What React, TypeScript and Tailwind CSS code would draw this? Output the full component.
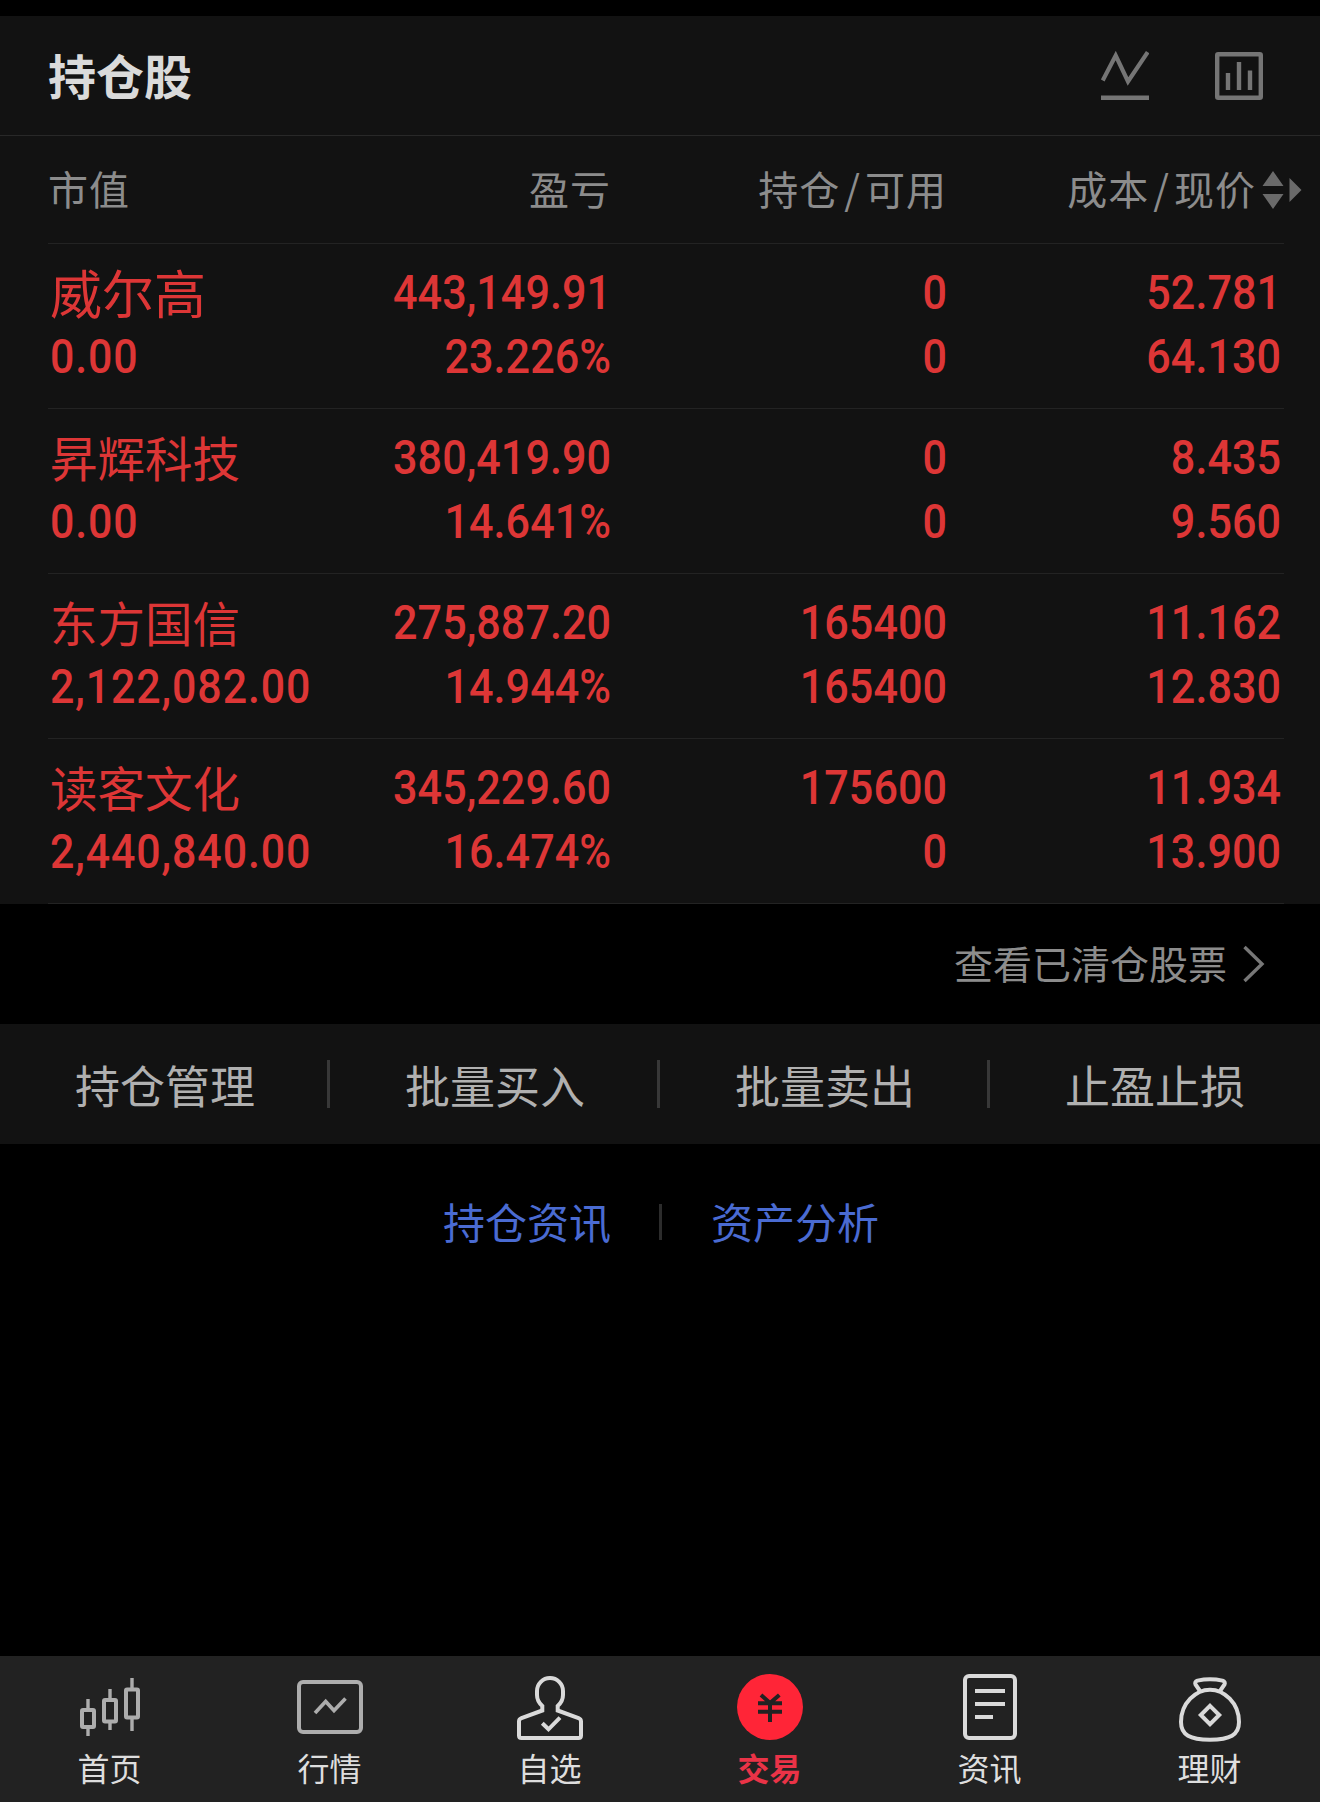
/**
 * Pantalla de posiciones: tabla de acciones, accesos rápidos y navegación inferior.
 */
import type { ReactNode } from 'react';

interface Holding {
  name: string;
  value: string;
  profit: string;
  rate: string;
  held: string;
  available: string;
  cost: string;
  price: string;
}

const holdings: Holding[] = [
  { name: '威尔高', value: '0.00', profit: '443,149.91', rate: '23.226%', held: '0', available: '0', cost: '52.781', price: '64.130' },
  { name: '昇辉科技', value: '0.00', profit: '380,419.90', rate: '14.641%', held: '0', available: '0', cost: '8.435', price: '9.560' },
  { name: '东方国信', value: '2,122,082.00', profit: '275,887.20', rate: '14.944%', held: '165400', available: '165400', cost: '11.162', price: '12.830' },
  { name: '读客文化', value: '2,440,840.00', profit: '345,229.60', rate: '16.474%', held: '175600', available: '0', cost: '11.934', price: '13.900' },
];

const actions = ['持仓管理', '批量买入', '批量卖出', '止盈止损'];

function NavIcon({ color, children }: { color: string; children: ReactNode }) {
  return (
    <svg className="w-[66px] h-[68px]" viewBox="0 0 66 68" fill="none" stroke={color} strokeWidth="4">
      {children}
    </svg>
  );
}

const tabs = [
  {
    label: '首页',
    icon: (
      <NavIcon color="#adadad">
        <rect x="5" y="36" width="12" height="17" rx="1" />
        <rect x="27" y="26" width="12" height="21.5" rx="1" />
        <rect x="49" y="15.5" width="12" height="28" rx="1" />
        <path d="M11 25v10M11 54v8M33 15v10M33 48v8M55 4v11M55 45v12" strokeWidth="3.4" />
      </NavIcon>
    ),
  },
  {
    label: '行情',
    icon: (
      <NavIcon color="#adadad">
        <rect x="2" y="8" width="62" height="50" rx="4" />
        <path d="M18 39L28.7 27.5L37 36.5L48.5 24.5" strokeWidth="3.6" />
      </NavIcon>
    ),
  },
  {
    label: '自选',
    icon: (
      <NavIcon color="#dadada">
        <path d="M25.3 36.5V32C22 29 20 25.5 20 21V17a13 13 0 0 1 26 0V21C46 25.5 44 29 40.7 32V36.5L61.5 44Q64 45 64 47.5V61.5Q64 64 61.5 64H4.5Q2 64 2 61.5V47.5Q2 45 4.5 44Z" />
        <path d="M25.3 49.3L31.5 55.3L43 43.7" />
      </NavIcon>
    ),
  },
  {
    label: '交易',
    active: true,
    icon: (
      <NavIcon color="#222">
        <circle cx="33" cy="33" r="33" fill="#ff2537" stroke="none" />
        <path d="M24 21L33 29L42.3 21M21 29.2H45M21 37.7H45M33 28V48" />
      </NavIcon>
    ),
  },
  {
    label: '资讯',
    icon: (
      <NavIcon color="#dadada">
        <rect x="8" y="2" width="50" height="62" rx="4" />
        <path d="M18 17H48M18 30H48M18 43H36" />
      </NavIcon>
    ),
  },
  {
    label: '理财',
    icon: (
      <NavIcon color="#dadada">
        <path d="M23 17L18.5 10.5Q17.3 7.6 20.5 6.6Q33 4 45.5 6.6Q48.7 7.6 47.5 10.5L43 17" />
        <path d="M33 15.7C47 15.7 62 29 62 48C62 61 53 65.7 33 65.7C13 65.7 4 61 4 48C4 29 19 15.7 33 15.7Z" />
        <path d="M33 31.8L42.2 41L33 50.2L23.8 41Z" />
      </NavIcon>
    ),
  },
];

function NumberPair({ top, bottom }: { top: string; bottom: string }) {
  return (
    <div className="flex flex-col items-end pt-[17px] -mr-px origin-right scale-x-[0.89] font-['Roboto',sans-serif] font-medium text-[48.5px] leading-[64px]">
      <span>{top}</span>
      <span>{bottom}</span>
    </div>
  );
}

function HoldingRow({ item }: { item: Holding }) {
  return (
    <div className="ml-12 mr-9 h-[165px] grid grid-cols-[225px_337px_336px_334px] border-b border-[#232323] text-[#dd3636]">
      <div className="flex flex-col items-start pl-0.5 pt-[17px]">
        <span className={`whitespace-nowrap h-[64px] ${item.name.length > 3 ? 'text-[47.5px] leading-[62px]' : 'text-[52px] leading-[62px]'}`}>
          {item.name}
        </span>
        <span className="origin-left scale-x-[0.885] tracking-[1px] font-['Roboto',sans-serif] font-medium text-[48.5px] leading-[64px]">
          {item.value}
        </span>
      </div>
      <NumberPair top={item.profit} bottom={item.rate} />
      <NumberPair top={item.held} bottom={item.available} />
      <NumberPair top={item.cost} bottom={item.price} />
    </div>
  );
}

function SplitLabel({ left, right }: { left: string; right: string }) {
  return (
    <span className="flex justify-end">
      {left}
      <span className="mx-[4px]">/</span>
      {right}
    </span>
  );
}

export default function App() {
  return (
    <div className="w-[1320px] h-[1802px] pt-4 flex flex-col bg-black font-['Noto_Sans_CJK_SC',sans-serif]">
      <section className="bg-[#121212]">
        <header className="h-[120px] pl-12 pr-[57px] flex items-center justify-between border-b border-[#282828]">
          <h1 className="pb-[3px] text-[48px] leading-none font-bold text-[#dadada]">持仓股</h1>
          <div className="flex items-center gap-[66px]">
            <svg className="w-12 h-[50px]" viewBox="0 0 48 50" fill="none" stroke="#757575" strokeWidth="4.2">
              <path d="M1.7 29.5L14.7 4.5L27 30.5L46.7 1.2" />
              <path d="M0 46.7H48" strokeWidth="4.6" />
            </svg>
            <svg className="w-12 h-[50px]" viewBox="0 0 48 50" fill="none" stroke="#757575" strokeWidth="4.4">
              <rect x="2.2" y="3.2" width="43.6" height="43.6" rx="1" />
              <path d="M13 22V39M24 11V39M35 19.5V39" />
            </svg>
          </div>
        </header>

        <div className="ml-12 mr-9 h-[108px] pb-[3px] grid grid-cols-[225px_338px_336px_309px_auto] items-center border-b border-[#232323] text-[40px] tracking-[1px] leading-none text-[#8c8c8c]">
          <span>市值</span>
          <span className="text-right">盈亏</span>
          <SplitLabel left="持仓" right="可用" />
          <SplitLabel left="成本" right="现价" />
          <svg className="w-[40px] h-10 mt-[3px] ml-[6px] -mr-8" viewBox="0 0 40 40" fill="#6a6a6a">
            <path d="M11 1L21.5 16H0.5ZM11 39L21.5 24H0.5ZM27.5 8L39.5 20L27.5 32Z" />
          </svg>
        </div>

        {holdings.map((item) => (
          <HoldingRow key={item.name} item={item} />
        ))}
      </section>

      <div className="h-[120px] pr-[55px] flex items-center justify-end gap-[15px] text-[39px] leading-none text-[#8c8c8c]">
        <span className="pb-1">查看已清仓股票</span>
        <svg className="w-[23px] h-[38px]" viewBox="0 0 23 38" fill="none" stroke="#777" strokeWidth="3.4">
          <path d="M2.5 2L20 19L2.5 36" />
        </svg>
      </div>

      <div className="h-[120px] grid grid-cols-4 items-center bg-[#121212] text-[45px] text-[#b0b0b0]">
        {actions.map((label) => (
          <button key={label} type="button" className="h-12 pl-[3px] leading-[45px] text-center border-r-3 border-[#383838] last:border-transparent">
            {label}
          </button>
        ))}
      </div>

      <div className="h-[156px] pl-0.5 flex items-center justify-center text-[42px] leading-none text-[#4a6bd2]">
        <span className="pb-0.5">持仓资讯</span>
        <span className="w-[3px] h-9 ml-[48px] mr-[49px] bg-[#2c2c2c]" />
        <span className="pb-0.5">资产分析</span>
      </div>

      <nav className="mt-auto h-[146px] pt-[18px] grid grid-cols-6 bg-[#222]">
        {tabs.map((tab) => (
          <div key={tab.label} className="flex flex-col items-center">
            {tab.icon}
            <span className={`mt-[9px] pr-px text-[32px] leading-8 ${tab.active ? 'font-bold text-[#ea3347]' : 'text-[#dedede]'}`}>
              {tab.label}
            </span>
          </div>
        ))}
      </nav>
    </div>
  );
}
